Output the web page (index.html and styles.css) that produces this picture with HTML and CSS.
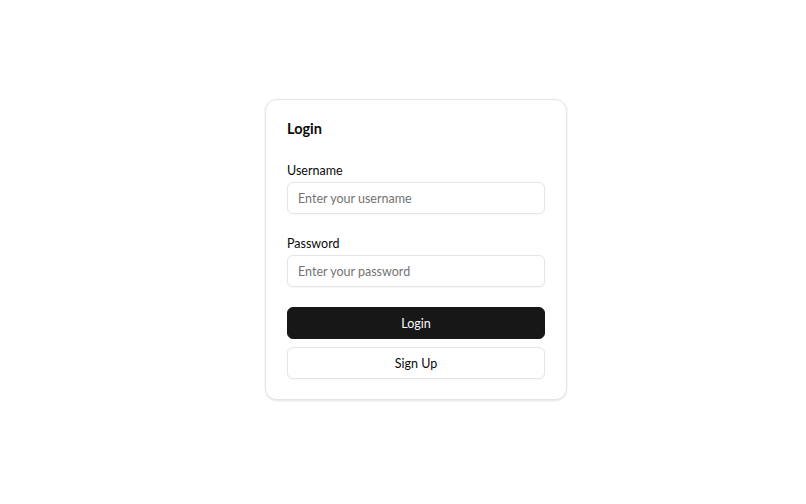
FILE: index.html
```html
<!DOCTYPE html>
<html lang="en">
<head>
<meta charset="utf-8">
<title>Login</title>
<link rel="stylesheet" href="styles.css">
</head>
<body>
<main class="page">
  <form class="card">
    <h1 class="title">Login</h1>
    <div class="fields">
      <label class="field">
        <span class="label">Username</span>
        <input class="input" type="text" placeholder="Enter your username">
      </label>
      <label class="field">
        <span class="label">Password</span>
        <input class="input" type="password" placeholder="Enter your password">
      </label>
    </div>
    <div class="actions">
      <button class="btn btn-primary" type="button">Login</button>
      <button class="btn btn-outline" type="button">Sign Up</button>
    </div>
  </form>
</main>
</body>
</html>
```
FILE: styles.css
```css
* { box-sizing: border-box; }
html, body { margin: 0; padding: 0; background: #ffffff; }
body {
  font-family: Lato, "Liberation Sans", sans-serif;
  color: #0a0a0a;
}
.page {
  min-height: 100vh;
  display: flex;
  align-items: center;
  justify-content: center;
  padding-left: 26px;
  padding-bottom: 5px;
}
.card {
  width: 302px;
  border: 1px solid #e5e5e5;
  border-radius: 12px;
  padding: 19px 21px 20px;
  background: #fff;
  box-shadow: 0 1px 3px rgba(0,0,0,0.08), 0 1px 2px rgba(0,0,0,0.04);
  display: flex;
  flex-direction: column;
}
.title {
  margin: 0 0 22px;
  font-size: 14.5px;
  line-height: 20px;
  font-weight: 700;
}
.fields {
  display: flex;
  flex-direction: column;
  gap: 20px;
}
.field {
  display: flex;
  flex-direction: column;
  gap: 1px;
}
.label {
  font-size: 12.5px;
  line-height: 20px;
  font-weight: 400;
}
.input {
  height: 32px;
  width: 100%;
  border: 1px solid #e5e5e5;
  border-radius: 6px;
  padding: 1px 10px 0;
  font-family: inherit;
  font-size: 12.5px;
  color: #0a0a0a;
  background: #fff;
  box-shadow: 0 1px 2px rgba(0,0,0,0.04);
  outline: none;
}
.input::placeholder { color: #737373; }
.actions {
  margin-top: 20px;
  display: flex;
  flex-direction: column;
  gap: 8px;
}
.btn {
  height: 32px;
  width: 100%;
  border-radius: 6px;
  padding: 1px 0 0;
  font-family: inherit;
  font-size: 12.5px;
  font-weight: 400;
  cursor: pointer;
}
.btn-primary {
  background: #171717;
  color: #fafafa;
  border: 1px solid #171717;
}
.btn-outline {
  background: #fff;
  color: #0a0a0a;
  border: 1px solid #e5e5e5;
  box-shadow: 0 1px 2px rgba(0,0,0,0.04);
}
```
